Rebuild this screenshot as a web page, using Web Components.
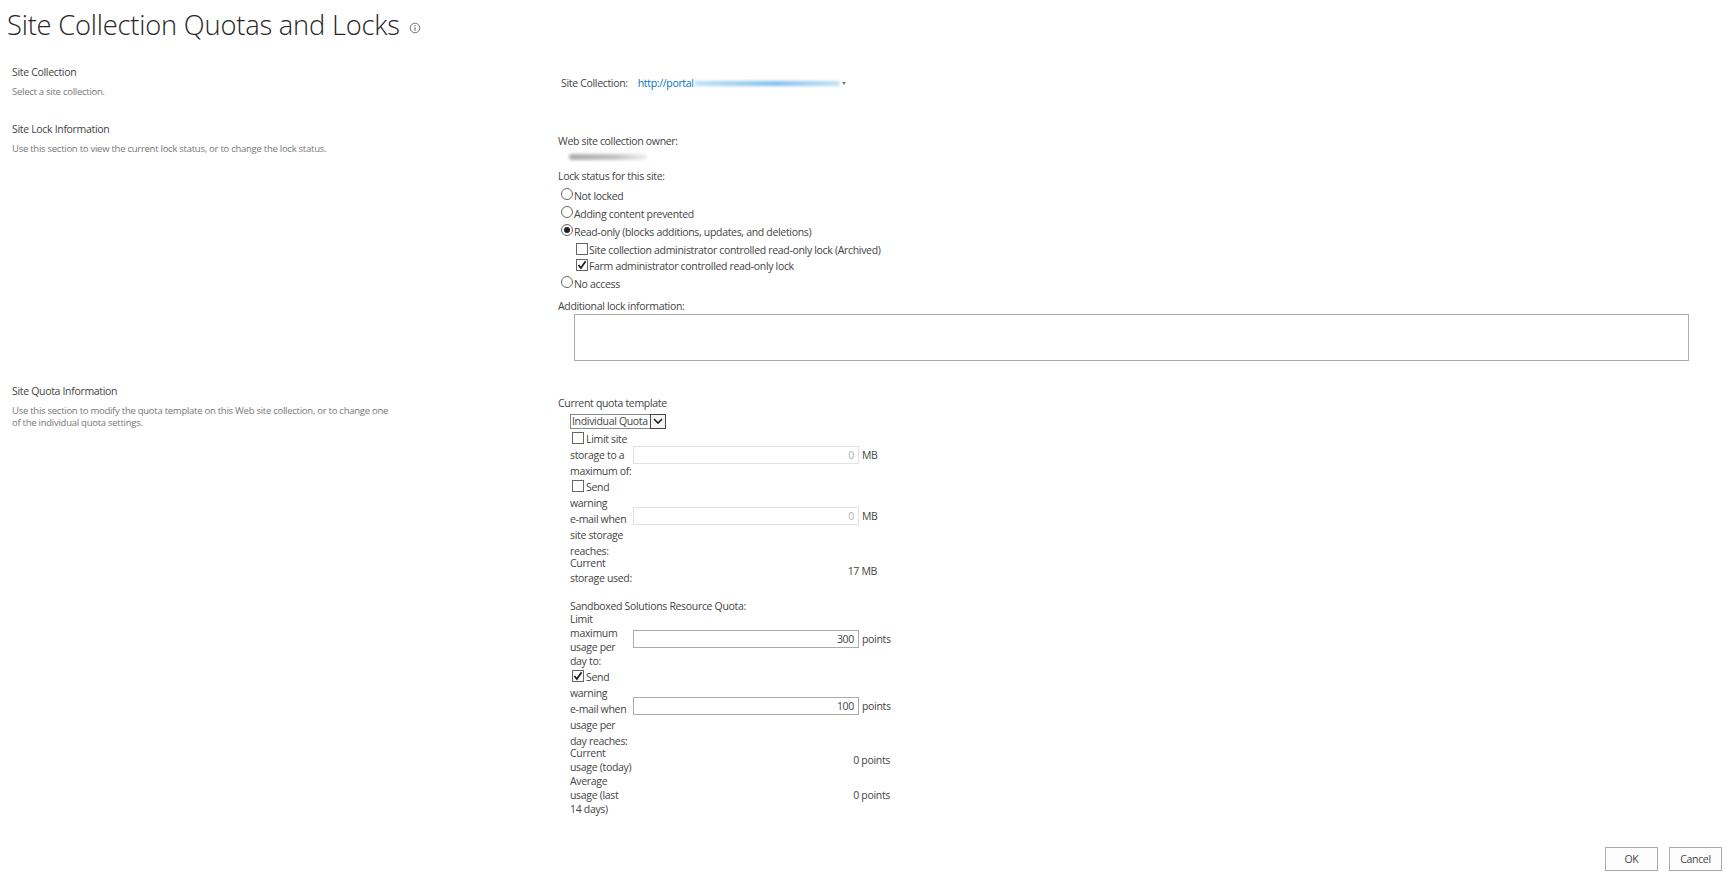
<!DOCTYPE html>
<html lang="en">
<head>
<meta charset="utf-8">
<title>Site Collection Quotas and Locks</title>
<style>
  html, body { margin: 0; background: #fff; }
  body { font: 10.5px/14px "Open Sans", "Noto Sans", sans-serif; letter-spacing: -0.32px; color: #444; width: 1727px; height: 891px; overflow: hidden; }
</style>
</head>
<body>
<sp-page>
  <sp-title>Site Collection Quotas and Locks</sp-title>

  <sp-section heading="Site Collection" height="57" style="margin-top:14px">
    <span slot="desc">Select a site collection.</span>
    <site-picker></site-picker>
  </sp-section>

  <sp-section heading="Site Lock Information" height="262">
    <span slot="desc">Use this section to view the current lock status, or to change the lock status.</span>
    <lock-panel>
      <sp-choice slot="choices" type="radio">Not locked</sp-choice>
      <sp-choice slot="choices" type="radio">Adding content prevented</sp-choice>
      <sp-choice slot="choices" type="radio" checked>Read-only (blocks additions, updates, and deletions)</sp-choice>
      <sp-choice slot="choices" type="checkbox" indent>Site collection administrator controlled read-only lock (Archived)</sp-choice>
      <sp-choice slot="choices" type="checkbox" indent checked>Farm administrator controlled read-only lock</sp-choice>
      <sp-choice slot="choices" type="radio">No access</sp-choice>
    </lock-panel>
  </sp-section>

  <sp-section heading="Site Quota Information" height="433">
    <span slot="desc">Use this section to modify the quota template on this Web site collection, or to change one<br>of the individual quota settings.</span>
    <quota-panel>
      <quota-row slot="storage" lh="16" value="0" unit="MB" disabled>
        <sp-choice type="checkbox" tight>Limit site</sp-choice>storage to a<br>maximum of:
      </quota-row>
      <quota-row slot="storage" lh="16" value="0" unit="MB" disabled lift="3">
        <sp-choice type="checkbox" tight>Send</sp-choice>warning<br>e-mail when<br>site storage<br>reaches:
      </quota-row>
      <quota-row slot="storage" lh="15" unit="17 MB" inset="13" pull="3">Current<br>storage used:</quota-row>
      <quota-row slot="points" lh="14" value="300" unit="points" lift="1">Limit<br>maximum<br>usage per<br>day to:</quota-row>
      <quota-row slot="points" lh="16" value="100" unit="points" lift="3" pull="-1">
        <sp-choice type="checkbox" tight checked>Send</sp-choice>warning<br>e-mail when<br>usage per<br>day reaches:
      </quota-row>
      <quota-row slot="points" lh="14" unit="0 points" pull="3">Current<br>usage (today)</quota-row>
      <quota-row slot="points" lh="14" unit="0 points">Average<br>usage (last<br>14 days)</quota-row>
    </quota-panel>
  </sp-section>

  <sp-footer>
    <sp-button>OK</sp-button>
    <sp-button>Cancel</sp-button>
  </sp-footer>
</sp-page>

<script>
class SpPage extends HTMLElement {
  constructor() {
    super();
    this.attachShadow({ mode: 'open' }).innerHTML = `
      <style>:host { display: block; }</style>
      <slot></slot>`;
  }
}
customElements.define('sp-page', SpPage);

class SpTitle extends HTMLElement {
  constructor() {
    super();
    this.attachShadow({ mode: 'open' }).innerHTML = `
      <style>
        :host { display: flex; align-items: center; height: 50px; padding: 0 0 0 7px; color: #262626; font: 300 27.3px/50px "Open Sans", sans-serif; letter-spacing: -0.2px; }
        svg { margin: 5px 0 0 9px; }
      </style>
      <slot></slot>
      <svg width="12" height="12" viewBox="0 0 12 12">
        <circle cx="6" cy="6" r="4.8" fill="none" stroke="#777" stroke-width="1"/>
        <path d="M6 5.2V8.8M6 3.1v1.2" stroke="#666" stroke-width="1.1" fill="none"/>
      </svg>`;
  }
}
customElements.define('sp-title', SpTitle);

class SpSection extends HTMLElement {
  constructor() {
    super();
    this.attachShadow({ mode: 'open' }).innerHTML = `
      <style>
        :host { display: grid; grid-template-columns: 558px 1fr; box-sizing: border-box; }
        .side { padding-left: 12px; }
        h3 { margin: 0; font: inherit; line-height: 16px; color: #444; white-space: nowrap; }
        .desc { margin-top: 6px; font-size: 9.5px; letter-spacing: -0.26px; line-height: 12px; color: #777; white-space: nowrap; }
      </style>
      <div class="side">
        <h3></h3>
        <div class="desc"><slot name="desc"></slot></div>
      </div>
      <div class="main"><slot></slot></div>`;
  }
  connectedCallback() {
    this.shadowRoot.querySelector('h3').textContent = this.getAttribute('heading');
    this.style.height = this.getAttribute('height') + 'px';
  }
}
customElements.define('sp-section', SpSection);

class SitePicker extends HTMLElement {
  constructor() {
    super();
    this.attachShadow({ mode: 'open' }).innerHTML = `
      <style>
        :host { display: flex; align-items: center; height: 14px; padding: 12px 0 0 3px; white-space: nowrap; }
        a { margin-left: 10px; color: #0072c6; text-decoration: none; }
        .blur { width: 146px; height: 5px; border-radius: 3px; background: linear-gradient(90deg, #bfe0f5, #7fc0ee 55%, #bfe0f5); filter: blur(1.5px); }
        .arrow { width: 0; height: 0; margin: 1px 0 0 2px; border: 2.5px solid transparent; border-top: 3px solid #777; border-bottom: 0; }
      </style>
      <span>Site Collection:</span>
      <a href="#">http://portal</a><span class="blur"></span><span class="arrow"></span>`;
  }
}
customElements.define('site-picker', SitePicker);

class SpChoice extends HTMLElement {
  constructor() {
    super();
    this.attachShadow({ mode: 'open' }).innerHTML = `
      <style>
        :host { display: flex; align-items: center; white-space: nowrap; }
        :host([type=radio]) { padding-left: 3px; }
        :host([indent]) { padding-left: 18px; }
        :host([tight]) { padding-left: 2px; }
        .mark { flex: none; box-sizing: border-box; width: 12px; height: 12px; margin-right: 1px; border: 1px solid #666; background: #fff; position: relative; top: -2px; }
        :host([type=radio]) .mark { border-radius: 50%; }
        :host([type=radio][checked]) .mark::after { content: ""; position: absolute; inset: 2px; border-radius: 50%; background: #222; }
        :host([type=checkbox]) .mark { top: -1px; margin-right: 2px; }
        :host([indent]) .mark { margin-right: 1px !important; }
        svg { display: none; position: absolute; left: 0; top: 0; }
        :host([type=checkbox][checked]) svg { display: block; }
      </style>
      <span class="mark"><svg width="10" height="10" viewBox="0 0 10 10"><path d="M1.5 5l2.4 3L8.6 1.2" fill="none" stroke="#222" stroke-width="1.8"/></svg></span>
      <span><slot></slot></span>`;
  }
}
customElements.define('sp-choice', SpChoice);

class LockPanel extends HTMLElement {
  constructor() {
    super();
    this.attachShadow({ mode: 'open' }).innerHTML = `
      <style>
        :host { display: block; padding-top: 13px; }
        .blur { width: 78px; height: 6px; margin: 6px 0 9px 11px; border-radius: 3px; background: linear-gradient(90deg, #aaa, #c4c4c4 60%, #f0f0f0); filter: blur(1.5px); }
        .choices { display: grid; grid-template-rows: 18px 17px 19px 17px 16px 19px; margin-top: 4px; }
        .extra { margin-top: 6px; }
        .box { box-sizing: border-box; width: 1115px; height: 47px; margin: 1px 0 0 16px; border: 1px solid #ababab; background: #fff; }
      </style>
      <div>Web site collection owner:</div>
      <div class="blur"></div>
      <div>Lock status for this site:</div>
      <div class="choices"><slot name="choices"></slot></div>
      <div class="extra">Additional lock information:</div>
      <div class="box"></div>`;
  }
}
customElements.define('lock-panel', LockPanel);

class QuotaPanel extends HTMLElement {
  constructor() {
    super();
    this.attachShadow({ mode: 'open' }).innerHTML = `
      <style>
        :host { display: block; padding-top: 13px; }
        .body { padding-left: 12px; }
        .select { display: flex; width: 96px; height: 15px; margin: 4px 0 2px; box-sizing: border-box; }
        .value { flex: 1; box-sizing: border-box; padding-left: 1px; border: 1px solid #8a8a8a; border-right: 0; line-height: 13px; white-space: nowrap; overflow: hidden; }
        .btn { display: flex; align-items: center; justify-content: center; flex: none; width: 16px; box-sizing: border-box; border: 1px solid #444; background: #f4f4f4; }
        .sandbox { margin: 13px 0 -1px; white-space: nowrap; }
      </style>
      <div>Current quota template</div>
      <div class="body">
        <div class="select">
          <span class="value">Individual Quota</span>
          <span class="btn"><svg width="10" height="7" viewBox="0 0 10 7"><path d="M1 1l4 4 4-4" fill="none" stroke="#222" stroke-width="1.6"/></svg></span>
        </div>
        <slot name="storage"></slot>
        <div class="sandbox">Sandboxed Solutions Resource Quota:</div>
        <slot name="points"></slot>
      </div>`;
  }
}
customElements.define('quota-panel', QuotaPanel);

class QuotaRow extends HTMLElement {
  constructor() {
    super();
    this.attachShadow({ mode: 'open' }).innerHTML = `
      <style>
        :host { display: grid; grid-template-columns: 63px 226px auto; align-items: center; width: 320px; }
        .label { white-space: nowrap; }
        .field { box-sizing: border-box; height: 18px; padding: 0 4px; border: 1px solid #ababab; background: #fff; text-align: right; line-height: 16px; color: #444; }
        :host([disabled]) .field { border-color: #e1e1e1; color: #b1b1b1; }
        .unit { padding-left: 3px; white-space: nowrap; }
        .plain { grid-column: 2 / 4; text-align: right; }
      </style>
      <div class="label"><slot></slot></div>`;
  }
  connectedCallback() {
    const root = this.shadowRoot;
    root.querySelector('.label').style.lineHeight = this.getAttribute('lh') + 'px';
    this.style.marginTop = -(this.getAttribute('pull') || 0) + 'px';
    const value = this.getAttribute('value');
    const unit = this.getAttribute('unit');
    const lift = this.getAttribute('lift') || 0;
    if (value === null) {
      const cell = document.createElement('div');
      cell.className = 'plain';
      cell.textContent = unit;
      cell.style.paddingRight = (this.getAttribute('inset') || 0) + 'px';
      root.append(cell);
    } else {
      const field = document.createElement('div');
      field.className = 'field';
      field.textContent = value;
      field.style.marginBottom = lift * 2 + 'px';
      const cell = document.createElement('div');
      cell.className = 'unit';
      cell.textContent = unit;
      cell.style.marginBottom = lift * 2 + 'px';
      root.append(field, cell);
    }
  }
}
customElements.define('quota-row', QuotaRow);

class SpFooter extends HTMLElement {
  constructor() {
    super();
    this.attachShadow({ mode: 'open' }).innerHTML = `
      <style>:host { display: flex; justify-content: flex-end; gap: 11px; padding: 31px 5px 0 0; }</style>
      <slot></slot>`;
  }
}
customElements.define('sp-footer', SpFooter);

class SpButton extends HTMLElement {
  constructor() {
    super();
    this.attachShadow({ mode: 'open' }).innerHTML = `
      <style>
        :host { display: flex; align-items: center; justify-content: center; box-sizing: border-box; width: 53px; height: 24px; border: 1px solid #ababab; background: #fdfdfd; color: #444; }
      </style>
      <slot></slot>`;
  }
}
customElements.define('sp-button', SpButton);
</script>
</body>
</html>
